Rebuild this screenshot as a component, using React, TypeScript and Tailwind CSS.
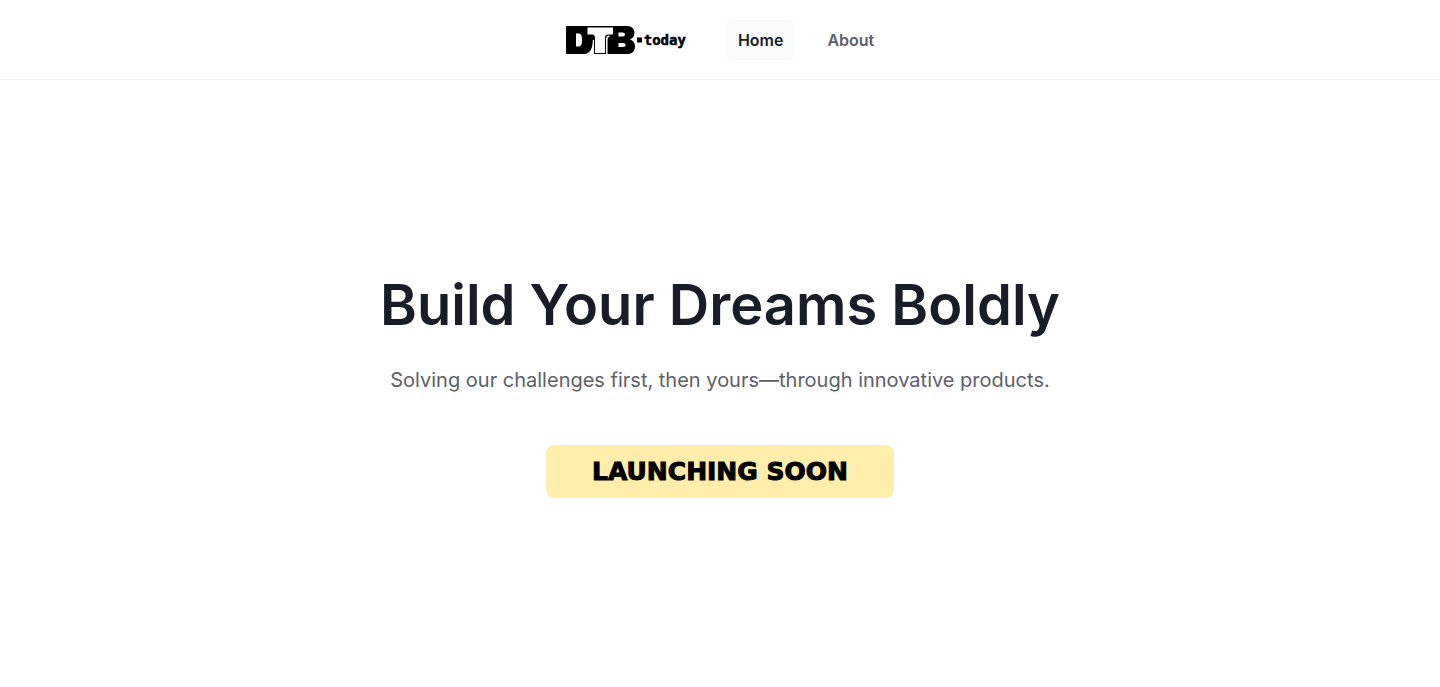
function Logo() {
  return (
    <a href="#home" aria-label="DTB today" className="flex items-center px-3 text-black">
      <svg width="76" height="28" viewBox="0 0 76 28" aria-hidden="true">
        <path
          fillRule="evenodd"
          fill="#000"
          d="M0 0H61C66 0 68.5 3.2 68.5 7C68.5 10.4 66.4 12.6 64 13.4C67 14.4 69 16.8 69 20.2C69 25 66.4 28 61 28H0ZM10 7.5V20.5H12.5C15.3 20.5 16 18 16 14C16 10 15.3 7.5 12.5 7.5ZM52.5 6.5V10.5H56.5C58.2 10.5 59 9.8 59 8.5C59 7.2 58.2 6.5 56.5 6.5ZM52.5 17V21H57C58.8 21 59.6 20.3 59.6 19C59.6 17.7 58.8 17 57 17Z"
        />
        <path fill="#fff" d="M21.5 1.5H47V8.5H42C39.8 8.5 39 9.8 39 12V27H29V12C29 9.8 28 8.5 26 8.5H21.5Z" />
        <path fill="#fff" d="M28 14V28H19.5C24.5 26.5 26.8 22 26.8 14Z" />
        <path fill="none" stroke="#fff" strokeWidth="1.5" d="M40.8 28V13C40.8 11 41.6 10.2 43.5 10.2" />
        <path fill="#000" d="M71 11.5H76V16.5H71Z" />
      </svg>
      <span className="pl-0.5 font-['DejaVu_Sans_Mono',monospace] text-sm font-bold [-webkit-text-stroke:0.5px_black]">
        today
      </span>
    </a>
  );
}

export default function App() {
  return (
    <div className="flex min-h-screen flex-col bg-white font-['Inter',sans-serif]">
      <header className="flex h-20 items-center justify-center border-b border-[#f1f2f4]">
        <Logo />
        <nav aria-label="Main" className="ml-7 flex gap-5 text-base font-semibold">
          <a href="#home" aria-current="page" className="rounded-md bg-[#f9fafc] px-3 py-2 text-[#191d27]">
            Home
          </a>
          <a href="#about" className="rounded-md px-3 py-2 text-[#5d606b]">
            About
          </a>
        </nav>
      </header>
      <main className="flex flex-1 flex-col items-center justify-center px-8 text-center">
        <h1 className="text-[56px] leading-[72px] font-semibold text-[#191d27]">Build Your Dreams Boldly</h1>
        <p className="mt-6 text-xl leading-[30px] text-[#5d606b]">
          Solving our challenges first, then yours—through innovative products.
        </p>
        <button
          type="button"
          className="mt-[50px] rounded-lg bg-[#ffedab] px-[46px] py-2.5 font-['DejaVu_Sans',sans-serif] text-[25px] leading-[33px] font-bold text-black [-webkit-text-stroke:1px_black]"
        >
          LAUNCHING SOON
        </button>
      </main>
    </div>
  );
}
